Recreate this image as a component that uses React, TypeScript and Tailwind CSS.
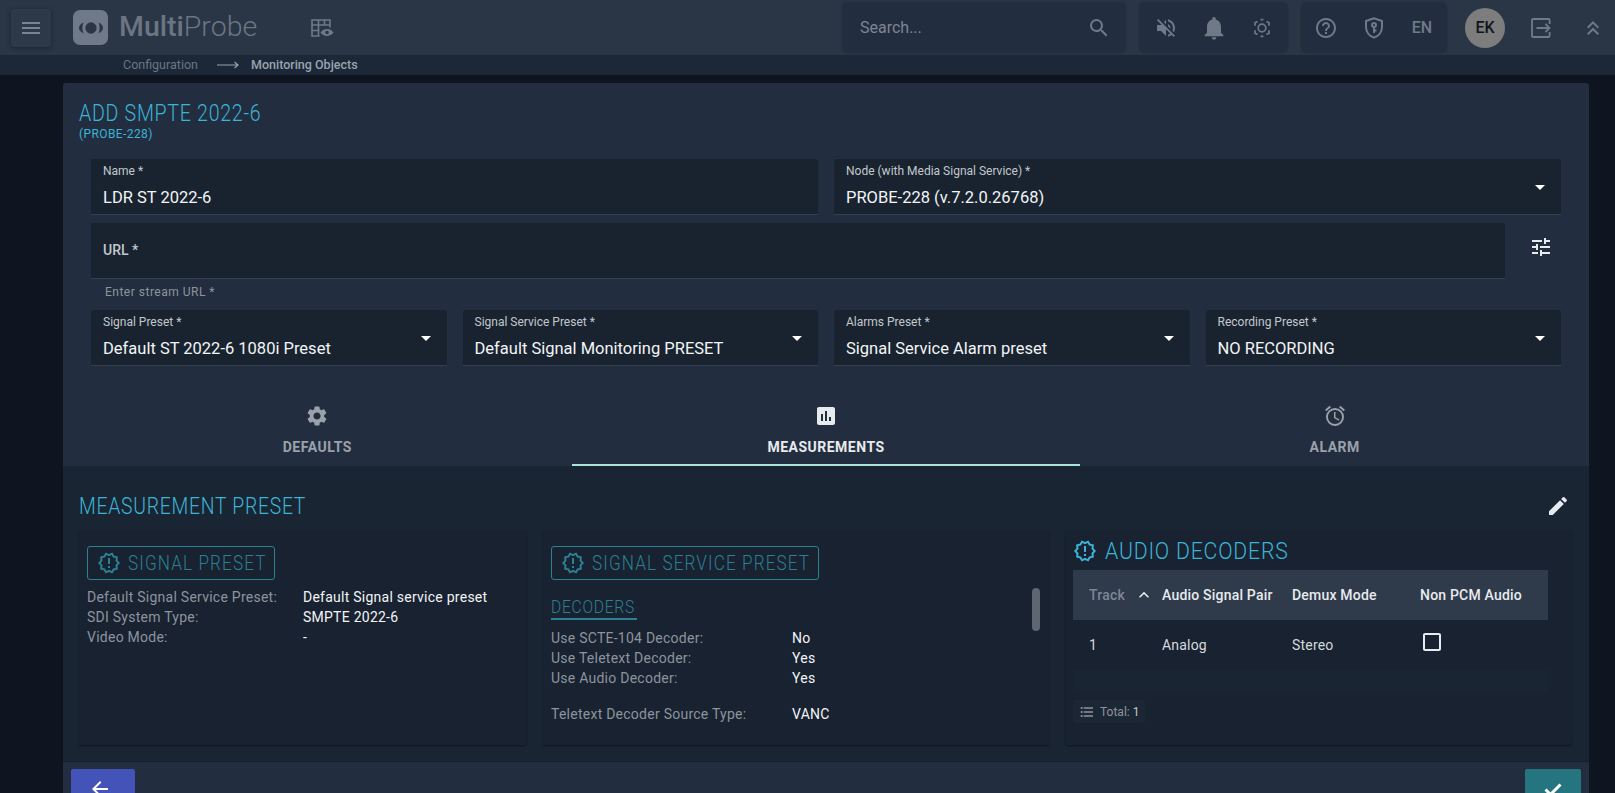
import {
  MdMenu,
  MdSearch,
  MdVolumeOff,
  MdNotifications,
  MdHelpOutline,
  MdKeyboardDoubleArrowUp,
  MdSettings,
  MdAssessment,
  MdOutlineAlarm,
  MdEdit,
  MdTune,
  MdArrowDropDown,
  MdKeyboardArrowUp,
  MdFormatListBulleted,
  MdArrowBack,
  MdOutlineNewReleases,
  MdOutlineCheckBoxOutlineBlank,
} from 'react-icons/md'

function Logo() {
  return (
    <div className="w-[35px] h-[35px] rounded-[7px] bg-[#6f7987] flex items-center justify-center">
      <svg width="24" height="12" viewBox="0 0 24 12" fill="#2a3545">
        <ellipse cx="12" cy="6" rx="5.6" ry="5.8" />
        <path d="M4.6 .6C1.8 1.8 0 3.8 0 6s1.8 4.2 4.6 5.4C3.7 9.6 3.4 7.8 3.4 6s.3-3.6 1.2-5.4Z" />
        <path d="M19.4 .6C22.2 1.8 24 3.8 24 6s-1.8 4.2-4.6 5.4c.9-1.8 1.2-3.6 1.2-5.4s-.3-3.6-1.2-5.4Z" />
      </svg>
    </div>
  )
}

function TableEye() {
  return (
    <svg width="23" height="18" viewBox="0 0 23 18" fill="none" stroke="#6f7987" strokeWidth="1.6">
      <path d="M8.5 17H1V1h18v7.5" />
      <path d="M1 6h18M1 11.5h7.5M7.5 1v16M13.5 1v5" />
      <path d="M9.5 13.5c3.2-4.6 9.8-4.6 13 0-3.2 4.6-9.8 4.6-13 0Z" fill="#6f7987" stroke="none" />
      <circle cx="16" cy="13.5" r="1.8" fill="#2a3545" stroke="none" />
    </svg>
  )
}

function ShieldKey() {
  return (
    <svg width="22" height="24" viewBox="0 0 22 24" fill="none" stroke="#6f7987" strokeWidth="2">
      <path d="M11 2.2 3 5v6c0 5 3.4 9.2 8 10.6 4.6-1.4 8-5.6 8-10.6V5l-8-2.8Z" />
      <circle cx="11" cy="9" r="2" />
      <path d="M11 11v6M11 14.5h2.4" />
    </svg>
  )
}

function SunIcon() {
  return (
    <svg width="24" height="24" viewBox="0 0 24 24" fill="none" stroke="#6f7987" strokeWidth="1.7">
      <circle cx="12" cy="12" r="3.8" />
      <path d="M7.5 5.4 5 6.8v3M16.5 5.4 19 6.8v3M7.5 18.6 5 17.2v-3M16.5 18.6 19 17.2v-3" />
      <path d="M10.6 3.2h2.8L12 4.8ZM10.6 20.8h2.8L12 19.2Z" fill="#6f7987" strokeWidth="0.8" />
    </svg>
  )
}

function ExitIcon() {
  return (
    <svg width="20" height="20" viewBox="0 0 20 20" fill="none" stroke="#6f7987" strokeWidth="1.8">
      <path d="M18.6 6V1.9a.9.9 0 0 0-.9-.9H2a1 1 0 0 0-1 1v16a1 1 0 0 0 1 1h15.7a.9.9 0 0 0 .9-.9V14" />
      <path d="M5.5 10h13M14.5 6l4 4-4 4" />
    </svg>
  )
}

function Condensed({ className, children }: { className: string; children: React.ReactNode }) {
  return <span className={`block w-max origin-left whitespace-nowrap ${className}`}>{children}</span>
}

function Field({ label, value }: { label: string; value: string }) {
  return (
    <div className="h-[56px] bg-[#18232f] rounded-t-[3px] border-b border-[#343f50] px-3">
      <div className="text-[12px] leading-[14px] pt-[5px] text-[#c3c8ce]">{label}</div>
      <div className="text-[16.5px] leading-[20px] mt-[10px] text-[#f2f4f6]">{value}</div>
    </div>
  )
}

function SelectField({ label, value }: { label: string; value: string }) {
  return (
    <div className="relative">
      <Field label={label} value={value} />
      <MdArrowDropDown size={24} className="absolute right-[9px] top-[16px] text-white" />
    </div>
  )
}

function Tab({ icon, label, active }: { icon: React.ReactNode; label: string; active?: boolean }) {
  return (
    <div className={`flex flex-col items-center h-[100px] pt-[38px] border-b-2 ${active ? 'border-[#a5e6d8] text-[#e8ebee]' : 'border-transparent text-[#9aa1ab]'}`}>
      {icon}
      <div className="text-[14px] leading-[16px] font-bold tracking-[0.5px] mt-[11px]">{label}</div>
    </div>
  )
}

function Row({ name, value, valueLeft }: { name: string; value: string; valueLeft: string }) {
  return (
    <div className="flex text-[14px] leading-[20px] tracking-[0.25px]">
      <div className={`${valueLeft} shrink-0 text-[#8d949e]`}>{name}</div>
      <div className="text-[#f2f4f6]">{value}</div>
    </div>
  )
}

function PresetTitle({ title, width }: { title: string; width: string }) {
  return (
    <div className={`flex items-center h-[34px] px-[9px] gap-[7px] border border-[#2b8093] rounded-[3px] text-[#2b8093] ${width}`}>
      <MdOutlineNewReleases size={24} className="shrink-0" />
      <Condensed className="text-[20px] font-light tracking-[1.3px] scale-x-[0.856]">{title}</Condensed>
    </div>
  )
}

export default function App() {
  return (
    <div className="h-screen overflow-hidden flex flex-col bg-[#0e1520] font-[Roboto,sans-serif] text-white">
      {/* Header */}
      <div className="h-[55px] shrink-0 bg-[#2a3545] flex items-center pr-[10px] text-[#6f7987]">
        <div className="ml-[11px] w-[40px] h-[38px] rounded-[3px] bg-[#2d3848] shadow-[0_1px_4px_rgba(0,0,0,0.35)] flex items-center justify-center">
          <MdMenu size={24} className="text-[#7a8391]" />
        </div>
        <div className="ml-[22px]"><Logo /></div>
        <div className="ml-[11px] text-[28.5px] leading-none text-[#6b7583]">
          <span className="font-medium">Multi</span><span className="font-light">Probe</span>
        </div>
        <div className="ml-[54px]"><TableEye /></div>

        <div className="ml-auto w-[282px] h-[49px] rounded-[5px] bg-[#222e3f] shadow-[0_0_3px_rgba(0,0,0,0.4)] flex items-center pl-[17px] pr-[14px] justify-between">
          <span className="text-[16px] text-[#7d8693]">Search...</span>
          <MdSearch size={24} />
        </div>
        <div className="ml-[15px] w-[147px] h-[49px] rounded-[5px] bg-[#222e3f] shadow-[0_0_3px_rgba(0,0,0,0.4)] grid grid-cols-[48px_48px_48px] justify-center justify-items-center items-center">
          <MdVolumeOff size={24} />
          <MdNotifications size={28} />
          <SunIcon />
        </div>
        <div className="ml-[15px] w-[144px] h-[49px] rounded-[5px] bg-[#222e3f] shadow-[0_0_3px_rgba(0,0,0,0.4)] grid grid-cols-[48px_48px_48px] justify-center justify-items-center items-center">
          <MdHelpOutline size={24} />
          <ShieldKey />
          <span className="text-[16px] font-medium">EN</span>
        </div>
        <div className="ml-[19px] w-[40px] h-[40px] rounded-full bg-[#7d7d7d] flex items-center justify-center text-[16px] font-medium text-[#11161d]">EK</div>
        <div className="ml-[26px]"><ExitIcon /></div>
        <MdKeyboardDoubleArrowUp size={24} className="ml-[30px]" />
      </div>

      {/* Breadcrumb */}
      <div className="h-[20px] shrink-0 bg-[#1c2837] flex items-center pl-[123px] text-[12.5px]">
        <span className="text-[#6b7583]">Configuration</span>
        <svg width="22" height="10" viewBox="0 0 22 10" fill="none" stroke="#9aa1ab" strokeWidth="1.2" className="ml-[19px]">
          <path d="M0 5h21M17.5 2l3.5 3-3.5 3" />
        </svg>
        <span className="ml-[12px] font-medium text-[#9aa3ae]">Monitoring Objects</span>
      </div>

      <div className="pt-[8px] pl-[63px] pr-[26px] flex-1 min-h-0">
        <div className="bg-[#222e3f] rounded-t-[3px]">
          <div className="h-[283px] px-[16px] pt-[17px]">
            <h1 className="text-[24px] leading-[26px] font-light tracking-[0.9px] text-[#3bb4d6]">
              <Condensed className="scale-x-[0.815]">ADD SMPTE 2022-6</Condensed>
            </h1>
            <div className="text-[12px] leading-[14px] mt-[1px] tracking-[0.4px] text-[#3bb4d6]">(PROBE-228)</div>

            <div className="mt-[18px] mx-[12px] grid grid-cols-2 gap-x-[16px]">
              <Field label="Name *" value="LDR ST 2022-6" />
              <SelectField label="Node (with Media Signal Service) *" value="PROBE-228 (v.7.2.0.26768)" />
            </div>

            <div className="mt-[8px] ml-[12px] flex items-center">
              <div className="flex-1 h-[56px] bg-[#18232f] rounded-t-[3px] border-b border-[#343f50] px-3 flex items-center text-[14px] font-medium text-[#c3c8ce]">URL *</div>
              <div className="w-[68px] pl-[4px] flex justify-center -mt-[9px]"><MdTune size={24} className="text-[#e8ebee]" /></div>
            </div>
            <div className="mt-[6px] ml-[26px] text-[12px] leading-[14px] tracking-[0.5px] text-[#8d949e]">Enter stream URL *</div>

            <div className="mt-[11px] mx-[12px] grid grid-cols-4 gap-x-[16px]">
              <SelectField label="Signal Preset *" value="Default ST 2022-6 1080i Preset" />
              <SelectField label="Signal Service Preset *" value="Default Signal Monitoring PRESET" />
              <SelectField label="Alarms Preset *" value="Signal Service Alarm preset" />
              <SelectField label="Recording Preset *" value="NO RECORDING" />
            </div>
          </div>

          {/* Tabs */}
          <div className="grid grid-cols-3">
            <Tab icon={<MdSettings size={24} />} label="DEFAULTS" />
            <Tab icon={<MdAssessment size={24} />} label="MEASUREMENTS" active />
            <Tab icon={<MdOutlineAlarm size={24} />} label="ALARM" />
          </div>

          {/* Measurement preset */}
          <div className="bg-[#1a2533] h-[296px] px-[16px] pt-[28px] border-b border-[#151e2a]">
            <div className="flex items-center justify-between h-[24px] pr-[3px]">
              <h2 className="text-[24px] font-light tracking-[0.9px] text-[#3bb4d6]">
                <Condensed className="scale-x-[0.807]">MEASUREMENT PRESET</Condensed>
              </h2>
              <MdEdit size={24} className="text-[#e8ebee]" />
            </div>
            <div className="mt-[12px] grid grid-cols-[448px_506px_507px] gap-x-[16px] h-[215px]">
              <div className="bg-[#182230] rounded-[3px] shadow-[0_1px_2px_rgba(0,0,0,0.4)] px-[8px] pt-[16px]">
                <PresetTitle title="SIGNAL PRESET" width="w-[188px]" />
                <div className="mt-[7px]">
                  <Row name="Default Signal Service Preset:" value="Default Signal service preset" valueLeft="w-[216px]" />
                  <Row name="SDI System Type:" value="SMPTE 2022-6" valueLeft="w-[216px]" />
                  <Row name="Video Mode:" value="-" valueLeft="w-[216px]" />
                </div>
              </div>

              <div className="relative bg-[#182230] rounded-[3px] shadow-[0_1px_2px_rgba(0,0,0,0.4)] px-[8px] pt-[16px] overflow-hidden">
                <PresetTitle title="SIGNAL SERVICE PRESET" width="w-[268px]" />
                <div className="mt-[15px] w-[86px] border-b-2 border-[#2b8093] text-[18px] leading-[23px] font-light tracking-[0.8px] text-[#2b8093]">
                  <Condensed className="scale-x-[0.87]">DECODERS</Condensed>
                </div>
                <div className="mt-[8px]">
                  <Row name="Use SCTE-104 Decoder:" value="No" valueLeft="w-[241px]" />
                  <Row name="Use Teletext Decoder:" value="Yes" valueLeft="w-[241px]" />
                  <Row name="Use Audio Decoder:" value="Yes" valueLeft="w-[241px]" />
                </div>
                <div className="mt-[16px]">
                  <Row name="Teletext Decoder Source Type:" value="VANC" valueLeft="w-[241px]" />
                </div>
                <div className="absolute right-[9px] top-[58px] w-[8px] h-[43px] rounded-full bg-[#5d6671]" />
              </div>

              <div className="bg-[#182230] rounded-[3px] shadow-[0_1px_2px_rgba(0,0,0,0.4)] pl-[8px] pr-[24px] pt-[2px]">
                <div className="flex items-center gap-[8px] h-[38px] text-[#3bb4d6]">
                  <MdOutlineNewReleases size={24} className="shrink-0" />
                  <Condensed className="text-[24px] font-light tracking-[0.9px] scale-x-[0.885]">AUDIO DECODERS</Condensed>
                </div>
                <div className="bg-[#1a2533]">
                  <div className="grid grid-cols-[89px_130px_128px_1fr] items-center h-[50px] bg-[#2f3a4a] text-[14px] tracking-[0.2px] font-medium text-[#e8ebee]">
                    <div className="pl-[16px] flex items-center text-[#7d8693]">Track<MdKeyboardArrowUp size={20} className="ml-[9px] text-[#e8ebee]" /></div>
                    <div className="whitespace-nowrap overflow-hidden">Audio Signal Pair</div>
                    <div>Demux Mode</div>
                    <div>Non PCM Audio</div>
                  </div>
                  <div className="grid grid-cols-[89px_130px_128px_1fr] items-center h-[50px] bg-[#182230] text-[14px] tracking-[0.2px] text-[#d5d9de]">
                    <div className="pl-[16px]">1</div>
                    <div>Analog</div>
                    <div>Stereo</div>
                    <div className="-mt-[6px]"><MdOutlineCheckBoxOutlineBlank size={24} className="text-[#e8ebee]" /></div>
                  </div>
                  <div className="h-[22px]" />
                </div>
                <div className="mt-[8px] inline-flex items-center gap-[5px] h-[23px] px-[6px] rounded-[3px] bg-[#1c2735] text-[12px] text-[#8d949e]">
                  <MdFormatListBulleted size={16} />
                  <span>Total: <span className="text-[#c3c8ce]">1</span></span>
                </div>
              </div>
            </div>
          </div>

          {/* Footer */}
          <div className="flex justify-between pt-[7px] pl-[8px] pr-[8px]">
            <div className="w-[64px] h-[40px] rounded-[2px] bg-[#4353b8] flex items-center justify-center pr-[6px]">
              <MdArrowBack size={24} />
            </div>
            <div className="w-[56px] h-[40px] rounded-[2px] bg-[#24757f] flex items-center justify-center">
              <svg width="24" height="24" viewBox="0 0 24 24" fill="none" stroke="white" strokeWidth="3">
                <path d="M4.5 12.5 9.5 17.5 19.5 7.5" />
              </svg>
            </div>
          </div>
        </div>
      </div>
    </div>
  )
}
